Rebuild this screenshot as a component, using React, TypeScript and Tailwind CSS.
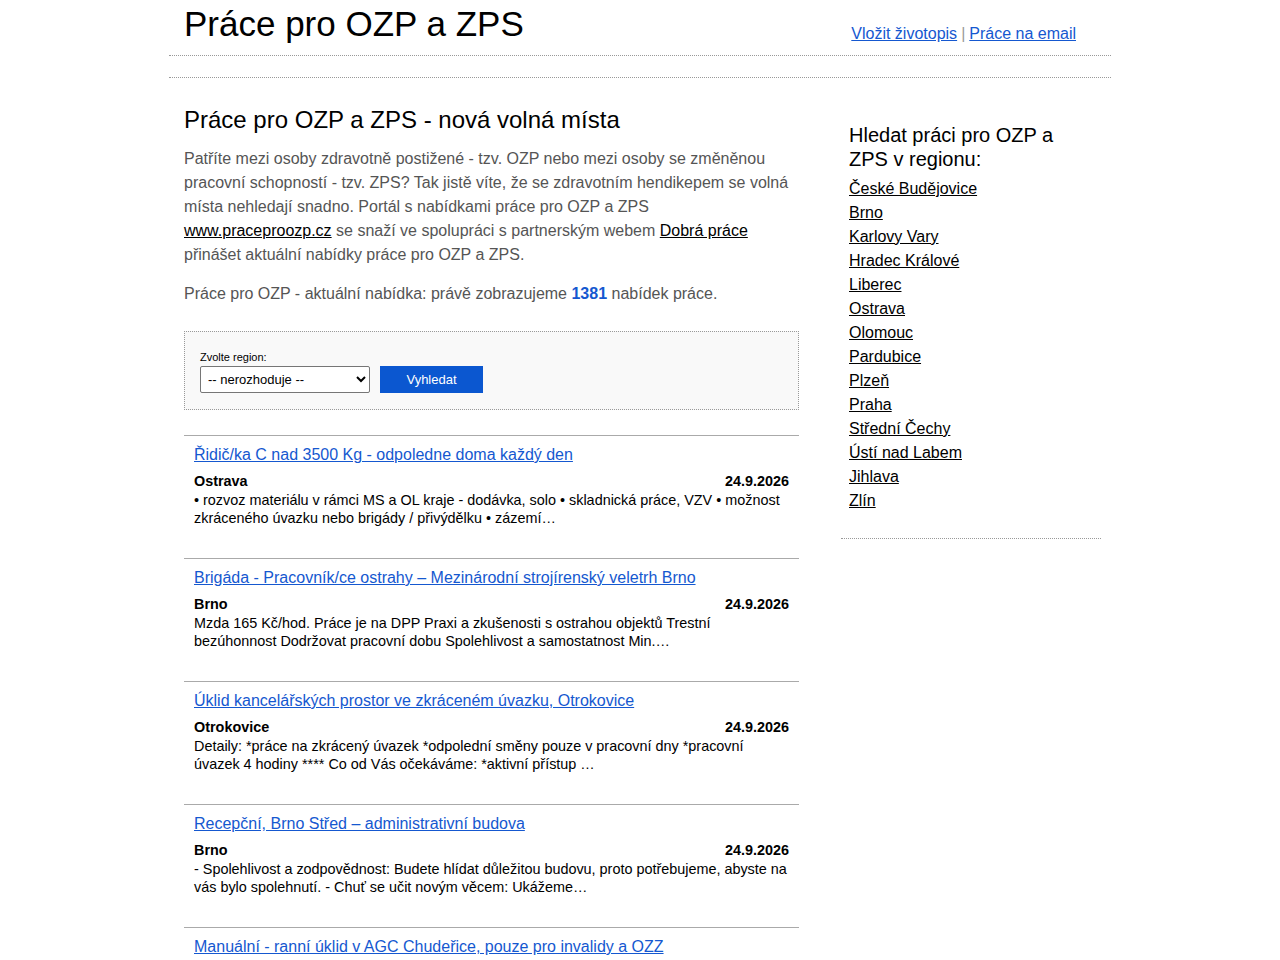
import React from "react";

const jobs = [
  {
    title: "Řidič/ka C nad 3500 Kg - odpoledne doma každý den",
    place: "Ostrava",
    date: "24.9.2026",
    desc: "• rozvoz materiálu v rámci MS a OL kraje - dodávka, solo • skladnická práce, VZV • možnost zkráceného úvazku nebo brigády / přivýdělku • zázemí…",
  },
  {
    title: "Brigáda - Pracovník/ce ostrahy – Mezinárodní strojírenský veletrh Brno",
    place: "Brno",
    date: "24.9.2026",
    desc: "Mzda 165 Kč/hod. Práce je na DPP Praxi a zkušenosti s ostrahou objektů Trestní bezúhonnost Dodržovat pracovní dobu Spolehlivost a samostatnost Min.…",
  },
  {
    title: "Úklid kancelářských prostor ve zkráceném úvazku, Otrokovice",
    place: "Otrokovice",
    date: "24.9.2026",
    desc: "Detaily: *práce na zkrácený úvazek *odpolední směny pouze v pracovní dny *pracovní úvazek 4 hodiny **** Co od Vás očekáváme: *aktivní přístup …",
  },
  {
    title: "Recepční, Brno Střed – administrativní budova",
    place: "Brno",
    date: "24.9.2026",
    desc: "- Spolehlivost a zodpovědnost: Budete hlídat důležitou budovu, proto potřebujeme, abyste na vás bylo spolehnutí. - Chuť se učit novým věcem: Ukážeme…",
  },
  {
    title: "Manuální - ranní úklid v AGC Chudeřice, pouze pro invalidy a OZZ",
    place: "Chudeřice",
    date: "24.9.2026",
    desc: "Hledáme spolehlivé kolegy na ranní úklid výrobních prostor. Práce je vhodná pro osoby se zdravotním znevýhodněním…",
  },
];

const regions = [
  "České Budějovice",
  "Brno",
  "Karlovy Vary",
  "Hradec Králové",
  "Liberec",
  "Ostrava",
  "Olomouc",
  "Pardubice",
  "Plzeň",
  "Praha",
  "Střední Čechy",
  "Ústí nad Labem",
  "Jihlava",
  "Zlín",
];

export default function App() {
  return (
    <div
      className="bg-white text-black min-h-[960px]"
      style={{ fontFamily: '"Liberation Sans", Arial, sans-serif' }}
    >
      <div className="w-[942px] ml-[169px]">
        {/* Header */}
        <header className="flex items-end justify-between border-b border-dotted border-[#999] h-[56px]">
          <h1 className="text-[35px] leading-[40px] pl-[15px] pb-[11px]">Práce pro OZP a ZPS</h1>
          <div className="text-[16px] leading-[20px] pr-[35px] pb-[11px] text-[#999]">
            <a href="#" className="text-[#1558d0] underline">Vložit životopis</a>
            <span className="mx-[4px]">|</span>
            <a href="#" className="text-[#1558d0] underline">Práce na email</a>
          </div>
        </header>
        <div className="h-[22px] border-b border-dotted border-[#999]" />

        <div className="flex">
          {/* Main column */}
          <main className="w-[615px] ml-[15px]">
            <h2 className="text-[24px] leading-[28px] mt-[28px] mb-[13px]">Práce pro OZP a ZPS - nová volná místa</h2>
            <p className="text-[16px] leading-[24px] text-[#555]">
              Patříte mezi osoby zdravotně postižené - tzv. OZP nebo mezi osoby se změněnou pracovní schopností - tzv. ZPS? Tak jistě víte, že se zdravotním hendikepem se volná místa nehledají snadno. Portál s nabídkami práce pro OZP a ZPS{" "}
              <a href="#" className="text-black underline">www.praceproozp.cz</a> se snaží ve spolupráci s partnerským webem{" "}
              <a href="#" className="text-black underline">Dobrá práce</a> přinášet aktuální nabídky práce pro OZP a ZPS.
            </p>
            <p className="text-[16px] leading-[24px] text-[#555] mt-[15px]">
              Práce pro OZP - aktuální nabídka: právě zobrazujeme{" "}
              <strong className="text-[#1558d0]">1381</strong> nabídek práce.
            </p>

            <div className="mt-[25px] border border-dotted border-[#999] bg-[#f9f9f9] h-[79px] px-[15px] pt-[19px]">
              <label className="block text-[11px] leading-[13px] text-black mb-[2px]">Zvolte region:</label>
              <div className="flex items-center gap-[10px]">
                <select className="w-[170px] h-[27px] border border-[#767676] rounded-[2px] bg-white text-[13px] px-[3px] text-black">
                  <option>-- nerozhoduje --</option>
                </select>
                <button className="w-[103px] h-[27px] bg-[#0b57d0] text-white text-[13px]">Vyhledat</button>
              </div>
            </div>

            <div className="mt-[25px]">
              {jobs.map((j) => (
                <div key={j.title} className="border-t border-[#aaa] px-[10px] pt-[9px] h-[123px]">
                  <a href="#" className="block text-[16px] leading-[20px] text-[#1558d0] underline">{j.title}</a>
                  <div className="flex justify-between mt-[7px] text-[14.4px] leading-[18px] font-bold">
                    <span>{j.place}</span>
                    <span>{j.date}</span>
                  </div>
                  <p className="text-[14.4px] leading-[18px] mt-[1px]">{j.desc}</p>
                </div>
              ))}
            </div>
          </main>

          {/* Sidebar */}
          <aside className="w-[260px] ml-[42px]">
            <div className="px-[8px] pt-[45px] pb-[25px] border-b border-dotted border-[#999]">
              <h3 className="text-[20px] leading-[24px] mb-[6px]">Hledat práci pro OZP a ZPS v regionu:</h3>
              <ul>
                {regions.map((r) => (
                  <li key={r} className="text-[16px] leading-[24px]">
                    <a href="#" className="text-black underline">{r}</a>
                  </li>
                ))}
              </ul>
            </div>
          </aside>
        </div>
      </div>
    </div>
  );
}
